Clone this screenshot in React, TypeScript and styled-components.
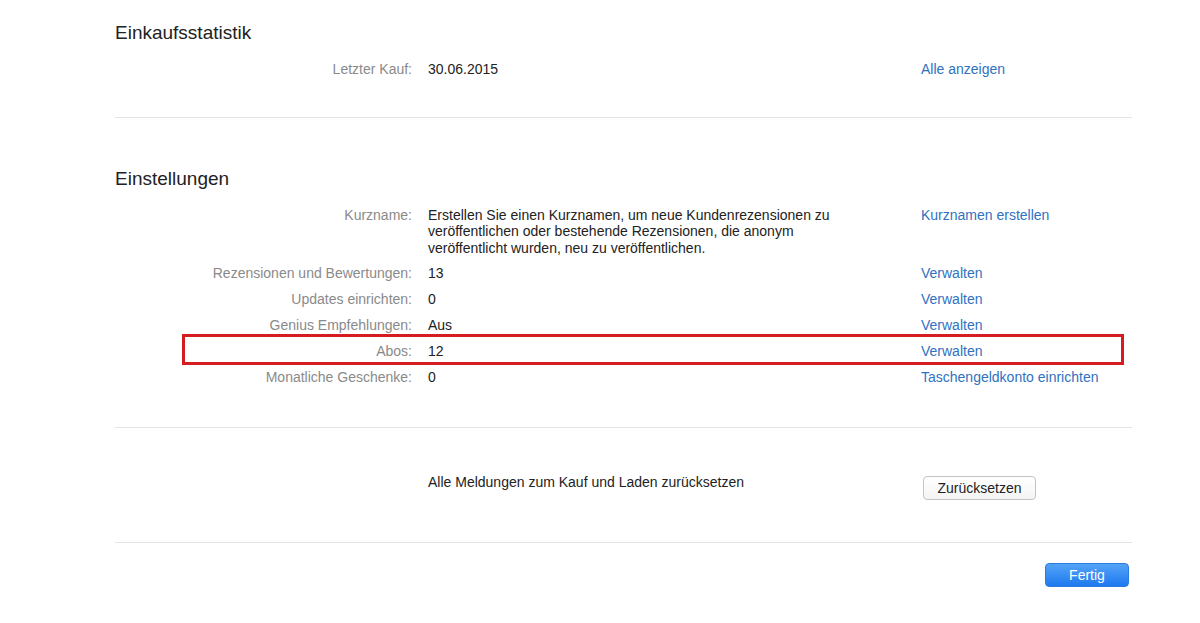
import React from "react";
import styled, { createGlobalStyle } from "styled-components";

const Global = createGlobalStyle`
  body { margin: 0; background: #fff; font-family: "Liberation Sans", Arial, sans-serif; }
`;

const Page = styled.div`
  width: 1017px;
  margin-left: 115px;
`;

const Section = styled.section<{ $pt: number; $pb: number }>`
  padding-top: ${(p) => p.$pt}px;
  padding-bottom: ${(p) => p.$pb}px;
  border-bottom: 1px solid #e4e4e4;
`;

const Heading = styled.h2`
  margin: 0 0 11px;
  font-size: 19px;
  font-weight: normal;
  color: #222;
  line-height: 24px;
`;

const Row = styled.div<{ $marked?: boolean }>`
  position: relative;
  display: grid;
  grid-template-columns: 297px 477px 1fr;
  column-gap: 16px;
  font-size: 14px;
  line-height: 16.5px;
  padding: 4.7px 0;
  ${(p) =>
    p.$marked &&
    `&::after{content:"";position:absolute;left:67px;top:-4px;width:942px;height:31px;border:3px solid #d51c20;box-sizing:border-box;}`}
`;

const Label = styled.div`
  text-align: right;
  color: #8a8a8a;
  white-space: nowrap;
`;

const Value = styled.div`
  color: #222;
  padding-right: 60px;
`;

const Link = styled.a`
  color: #2f72c2;
  text-decoration: none;
`;

const ResetRow = styled.div`
  display: grid;
  grid-template-columns: 297px 477px 1fr;
  column-gap: 16px;
  font-size: 14px;
  align-items: center;
`;

const GrayButton = styled.button`
  margin-left: 2px;
  width: 113px;
  height: 24px;
  border: 1px solid #c4c4c4;
  border-radius: 4px;
  background: linear-gradient(#fff, #f4f4f4);
  font-family: inherit;
  font-size: 14px;
  color: #222;
  margin-top: 12px;
`;

const Footer = styled.div`
  display: flex;
  justify-content: flex-end;
  padding: 20px 3px 0 0;
`;

const BlueButton = styled.button`
  width: 84px;
  height: 24px;
  border: 1px solid #2a7be0;
  border-radius: 4px;
  background: linear-gradient(#55a3f8, #1e79ef);
  color: #fff;
  font-family: inherit;
  font-size: 14px;
`;

export default function App() {
  return (
    <>
      <Global />
      <Page>
        <Section $pt={21} $pb={35}>
          <Heading>Einkaufsstatistik</Heading>
          <Row>
            <Label>Letzter Kauf:</Label>
            <Value>30.06.2015</Value>
            <Link>Alle anzeigen</Link>
          </Row>
        </Section>
        <Section $pt={49} $pb={37}>
          <Heading>Einstellungen</Heading>
          <Row>
            <Label>Kurzname:</Label>
            <Value>
              Erstellen Sie einen Kurznamen, um neue Kundenrezensionen zu veröffentlichen oder bestehende
              Rezensionen, die anonym veröffentlicht wurden, neu zu veröffentlichen.
            </Value>
            <Link>Kurznamen erstellen</Link>
          </Row>
          <Row>
            <Label>Rezensionen und Bewertungen:</Label>
            <Value>13</Value>
            <Link>Verwalten</Link>
          </Row>
          <Row>
            <Label>Updates einrichten:</Label>
            <Value>0</Value>
            <Link>Verwalten</Link>
          </Row>
          <Row>
            <Label>Genius Empfehlungen:</Label>
            <Value>Aus</Value>
            <Link>Verwalten</Link>
          </Row>
          <Row $marked>
            <Label>Abos:</Label>
            <Value>12</Value>
            <Link>Verwalten</Link>
          </Row>
          <Row>
            <Label>Monatliche Geschenke:</Label>
            <Value>0</Value>
            <Link>Taschengeldkonto einrichten</Link>
          </Row>
        </Section>
        <Section $pt={36} $pb={42}>
          <ResetRow>
            <div />
            <Value>Alle Meldungen zum Kauf und Laden zurücksetzen</Value>
            <div>
              <GrayButton>Zurücksetzen</GrayButton>
            </div>
          </ResetRow>
        </Section>
        <Footer>
          <BlueButton>Fertig</BlueButton>
        </Footer>
      </Page>
    </>
  );
}
